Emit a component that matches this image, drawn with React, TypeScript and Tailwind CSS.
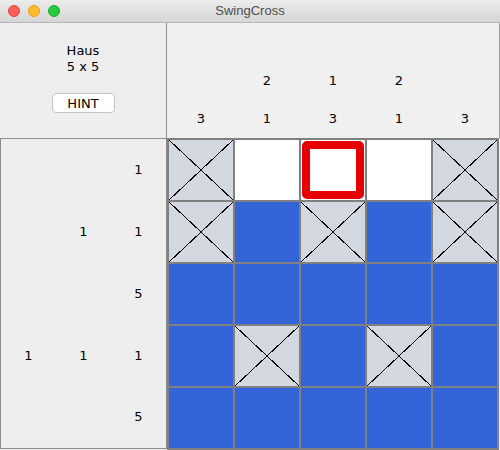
import React from "react";

type Cell = "x" | "w" | "b" | "r";

const cells: Cell[][] = [
  ["x", "w", "r", "w", "x"],
  ["x", "b", "x", "b", "x"],
  ["b", "b", "b", "b", "b"],
  ["b", "x", "b", "x", "b"],
  ["b", "b", "b", "b", "b"],
];

const colClues: (string | null)[][] = [
  [null, "3"],
  ["2", "1"],
  ["1", "3"],
  ["2", "1"],
  [null, "3"],
];

const rowClues: (string | null)[][] = [
  [null, null, "1"],
  [null, "1", "1"],
  [null, null, "5"],
  ["1", "1", "1"],
  [null, null, "5"],
];

function CellView({ c }: { c: Cell }) {
  if (c === "b") return <div className="bg-[#3465d8]" />;
  if (c === "w") return <div className="bg-white" />;
  if (c === "r")
    return (
      <div className="bg-white p-[1px]">
        <div className="w-full h-full border-[8px] border-[#e60000] rounded-[5px] bg-white" />
      </div>
    );
  return (
    <div className="bg-[#d3d8e0]">
      <svg width="64" height="60" viewBox="0 0 64 60" className="block" shapeRendering="crispEdges">
        <line x1="0" y1="0" x2="64" y2="60" stroke="#000" strokeWidth="1" />
        <line x1="64" y1="0" x2="0" y2="60" stroke="#000" strokeWidth="1" />
      </svg>
    </div>
  );
}

export default function App() {
  return (
    <div className="w-[500px] h-[450px] bg-[#eeeeee] flex flex-col overflow-hidden font-['DejaVu_Sans',sans-serif] text-[13px] text-black">
      {/* Title bar */}
      <div className="relative h-[23px] shrink-0 border-b border-[#b6b6b6] bg-gradient-to-b from-[#ececec] to-[#d6d6d6] flex items-center justify-center">
        <div className="absolute left-[8px] top-[5px] flex gap-[8px]">
          <span className="w-[12px] h-[12px] rounded-full bg-[#fc5f57] border border-[#e2463f]" />
          <span className="w-[12px] h-[12px] rounded-full bg-[#fdbc2e] border border-[#e1a116]" />
          <span className="w-[12px] h-[12px] rounded-full bg-[#28c840] border border-[#1aab29]" />
        </div>
        <span className="font-['Liberation_Sans',sans-serif] text-[13px] text-[#4d4d4d]">SwingCross</span>
      </div>

      {/* Top section */}
      <div className="flex h-[115px] shrink-0">
        <div className="w-[167px] border-r border-[#8c8c8c] flex flex-col items-center pt-[20px]">
          <div className="text-center leading-[16px]">
            <div>Haus</div>
            <div>5 x 5</div>
          </div>
          <button className="mt-[18px] w-[63px] h-[20px] bg-white border border-[#c4c4c4] rounded-[4px] leading-none text-[13px]">
            HINT
          </button>
        </div>
        <div className="flex-1 border-r border-[#a0a0a0] bg-[#f0f0f0] pl-[2px] flex gap-[2px]">
          {colClues.map((col, i) => (
            <div key={i} className="w-[64px] grid grid-rows-3">
              <div />
              {col.map((v, j) => (
                <div key={j} className="flex items-center justify-center">
                  {v}
                </div>
              ))}
            </div>
          ))}
        </div>
      </div>

      {/* Bottom section */}
      <div className="flex">
        <div className="w-[167px] h-[311px] border border-[#8c8c8c] flex flex-col">
          {rowClues.map((row, i) => (
            <div key={i} className="h-[62px] grid grid-cols-3">
              {row.map((v, j) => (
                <div key={j} className="flex items-center justify-center">
                  {v}
                </div>
              ))}
            </div>
          ))}
        </div>
        <div className="w-[332px] h-[312px] bg-[#808080] p-[2px] grid grid-cols-[repeat(5,64px)] grid-rows-[repeat(5,60px)] gap-[2px]">
          {cells.flat().map((c, i) => (
            <CellView key={i} c={c} />
          ))}
        </div>
      </div>
    </div>
  );
}
